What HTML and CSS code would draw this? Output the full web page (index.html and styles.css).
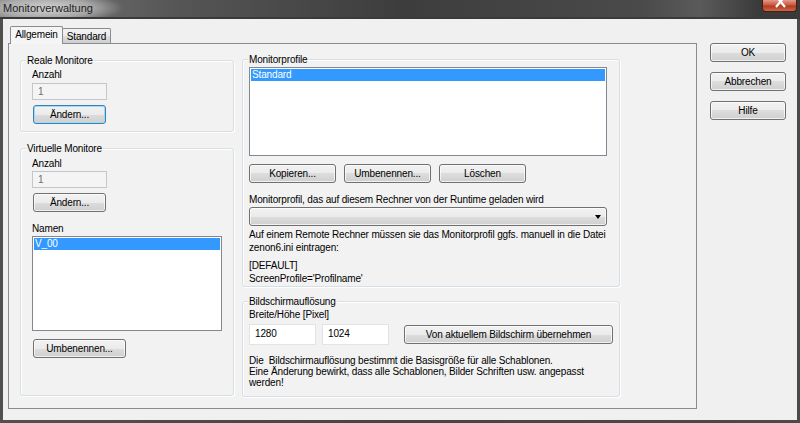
FILE: index.html
```html
<!DOCTYPE html>
<html>
<head>
<meta charset="utf-8">
<title>Monitorverwaltung</title>
<link rel="stylesheet" href="styles.css">
</head>
<body>
<div class="window">
  <div class="titlebar">
    <span class="title">Monitorverwaltung</span>
    <div class="close">
      <svg width="35" height="11" viewBox="0 0 35 11"><path d="M13 -4 L22 7 M22 -4 L13 7" stroke="#fff" stroke-width="2.2" fill="none"/></svg>
    </div>
  </div>
  <div class="client">
    <div class="tabctl">
      <div class="tabstrip">
        <div class="tab active">Allgemein</div>
        <div class="tab inactive">Standard</div>
      </div>
      <div class="panel">
        <div class="col-left">
          <div class="group g-real">
            <div class="gtitle">Reale Monitore</div>
            <div class="lbl l-anz1">Anzahl</div>
            <div class="edit disabled">1</div>
            <div class="btn focused b-aendern1">Ändern...</div>
          </div>
          <div class="group g-virt">
            <div class="gtitle">Virtuelle Monitore</div>
            <div class="lbl l-anz2">Anzahl</div>
            <div class="edit disabled e-anz2">1</div>
            <div class="btn b-aendern2">Ändern...</div>
            <div class="lbl l-namen">Namen</div>
            <div class="listbox lb-namen"><div class="sel">V_00</div></div>
            <div class="btn b-umb">Umbenennen...</div>
          </div>
        </div>
        <div class="col-right">
          <div class="group g-prof">
            <div class="gtitle">Monitorprofile</div>
            <div class="listbox lb-prof"><div class="sel">Standard</div></div>
            <div class="btnrow">
              <div class="btn b-row">Kopieren...</div>
              <div class="btn b-row">Umbenennen...</div>
              <div class="btn b-row">Löschen</div>
            </div>
            <div class="lbl l-runtime">Monitorprofil, das auf diesem Rechner von der Runtime geladen wird</div>
            <div class="combo"><span class="arrow"></span></div>
            <div class="txt t-remote">Auf einem Remote Rechner müssen sie das Monitorprofil ggfs. manuell in die Datei<br>zenon6.ini eintragen:</div>
            <div class="txt t-ini">[DEFAULT]<br>ScreenProfile='Profilname'</div>
          </div>
          <div class="group g-res">
            <div class="gtitle">Bildschirmauflösung</div>
            <div class="lbl">Breite/Höhe [Pixel]</div>
            <div class="resrow">
              <div class="edit res">1280</div>
              <div class="edit res">1024</div>
              <div class="btn b-von">Von aktuellem Bildschirm übernehmen</div>
            </div>
            <div class="txt t-info">Die&nbsp; Bildschirmauflösung bestimmt die Basisgröße für alle Schablonen.<br>Eine Änderung bewirkt, dass alle Schablonen, Bilder Schriften usw. angepasst<br>werden!</div>
          </div>
        </div>
      </div>
    </div>
    <div class="sidebtns">
      <div class="btn b-side">OK</div>
      <div class="btn b-side">Abbrechen</div>
      <div class="btn b-side">Hilfe</div>
    </div>
  </div>
</div>
</body>
</html>
```
FILE: styles.css
```css
* { box-sizing: border-box; }
html, body { margin: 0; padding: 0; }
body {
  width: 800px; height: 423px; overflow: hidden;
  background: #474747;
  font-family: "Liberation Sans", Arial, sans-serif;
  font-size: 10px; letter-spacing: -0.15px; color: #000;
}
.window {
  width: 800px; height: 423px;
  display: flex; flex-direction: column;
  background: linear-gradient(to right, #505050, #444 50%, #4a4a4a);
}
.titlebar {
  height: 19px; flex: none;
  display: flex; justify-content: space-between; align-items: flex-start;
  background:
    radial-gradient(ellipse 75px 16px at 48px 8px, rgba(215,215,215,0.95), rgba(215,215,215,0.55) 60%, rgba(215,215,215,0) 100%),
    linear-gradient(to right, #7a7a7a 0, #555 180px, #3d3d3d 400px, #4a4a4a 640px, #5a5a5a 700px, #3a3a3a 760px);
  border-bottom: 2px solid #3a3a3a;
}
.title {
  font-size: 11px; letter-spacing: 0; line-height: 17px; padding-left: 3px;
  color: #1e1e1e;
}
.close {
  width: 35px; height: 12px; margin-right: 3px;
  background: linear-gradient(#e29a88, #c9583f 45%, #b23a20 55%, #c96a4d);
  border: 1px solid #4a1c12; border-top: none;
  border-radius: 0 0 4px 4px;
}
.close svg { display: block; }
.client {
  flex: 1;
  margin: 0 3px 3px;
  background: #f0f0f0;
  display: flex;
  padding: 7px 0 0 5px;
}
.tabctl { width: 689px; display: flex; flex-direction: column; }
.tabstrip { height: 17px; display: flex; align-items: flex-end; padding-left: 2px; }
.tab {
  border: 1px solid #898c95; border-bottom: none;
  display: flex; align-items: center; justify-content: center;
  border-radius: 2px 2px 0 0;
  white-space: nowrap;
}
.tab.active {
  width: 53px; height: 18px; margin-bottom: -1px;
  background: #f5f5f5;
  position: relative; z-index: 1;
  padding-bottom: 2px;
}
.tab.inactive {
  width: 49px; height: 15px; margin-left: -1px;
  background: linear-gradient(#f2f2f2, #ebebeb 50%, #dddddd 50%, #cfcfcf);
}
.panel {
  height: 366px;
  border: 1px solid #898c95;
  background: #f2f2f2;
  display: flex;
  gap: 8px;
  padding: 15px 0 0 11px;
}
.col-left { width: 214px; display: flex; flex-direction: column; padding-top: 1px; }
.col-right { width: 378px; display: flex; flex-direction: column; }
.group {
  border: 1px solid #d5dfe5;
  border-radius: 3px;
  box-shadow: inset 1px 1px 0 #fff, 1px 1px 0 #fff;
  display: flex; flex-direction: column; align-items: flex-start;
}
.gtitle {
  margin-top: -7px;
  padding: 0 1px;
  line-height: 13px;
  background: #f2f2f2;
  white-space: nowrap;
}
.g-real .gtitle, .g-virt .gtitle { margin-left: -6px; }
.g-prof .gtitle, .g-res .gtitle { margin-left: -1px; }
.lbl, .txt { line-height: 13px; white-space: nowrap; }
.g-real { height: 72px; padding-left: 11px; }
.l-anz1 { margin-top: 1px; }
.edit {
  height: 17px; width: 75px;
  border: 1px solid #abadb3;
  background: #fff;
  padding-left: 5px;
  line-height: 15px;
}
.edit.disabled { background: #f4f4f4; border-color: #c4c6cb; color: #6d6d6d; margin-top: 2px; }
.btn {
  height: 19px;
  border: 1px solid #707070;
  border-radius: 3px;
  background: linear-gradient(#f2f2f2, #ebebeb 50%, #dddddd 50%, #cfcfcf);
  box-shadow: inset 0 0 0 1px rgba(255,255,255,0.7);
  display: flex; align-items: center; justify-content: center;
  white-space: nowrap;
}
.btn.focused {
  border-color: #3c7fb1;
  box-shadow: inset 0 0 0 1px #9fdcf9;
}
.b-aendern1, .b-aendern2 { width: 73px; margin-top: 5px; margin-left: 1px; }
.g-virt { height: 248px; margin-top: 16px; padding-left: 11px; }
.l-anz2 { margin-top: 2px; }
.edit.e-anz2 { margin-top: 1px; }
.l-namen { margin-top: 10px; }
.listbox {
  border: 1px solid #828790;
  background: #fff;
  padding: 1px;
}
.sel {
  background: #3399ff; color: #fff;
  line-height: 12px; padding-left: 1px;
}
.lb-namen { width: 190px; height: 95px; margin-top: 1px; }
.b-umb { width: 93px; margin-top: 8px; margin-left: 1px; }
.g-prof { height: 228px; padding-left: 6px; }
.lb-prof { width: 358px; height: 89px; margin-top: 1px; }
.btnrow { display: flex; gap: 8px; margin-top: 8px; }
.b-row { width: 87px; }
.l-runtime { margin-top: 10px; }
.combo {
  width: 358px; height: 19px; margin-top: 1px;
  border: 1px solid #707070; border-radius: 3px;
  background: linear-gradient(#f2f2f2, #ebebeb 50%, #dddddd 50%, #cfcfcf);
  box-shadow: inset 0 0 0 1px rgba(255,255,255,0.7);
  display: flex; align-items: center; justify-content: flex-end;
  padding-right: 5px;
}
.arrow {
  width: 0; height: 0;
  border-left: 3.5px solid transparent; border-right: 3.5px solid transparent;
  border-top: 4px solid #000;
  margin-top: 1px;
}
.t-remote { margin-top: 2px; }
.t-ini { margin-top: 5px; }
.g-res { height: 96px; margin-top: 14px; padding-left: 6px; }
.resrow { display: flex; align-items: center; margin-top: 3px; gap: 6px; }
.edit.res { width: 67px; height: 21px; border-color: #e3e3e3; line-height: 17px; }
.b-von { width: 209px; margin-left: 9px; }
.t-info { line-height: 11px; margin-top: 10px; }
.sidebtns {
  display: flex; flex-direction: column; gap: 10px;
  margin-top: 17px; margin-left: 13px;
}
.b-side { width: 76px; }
```
